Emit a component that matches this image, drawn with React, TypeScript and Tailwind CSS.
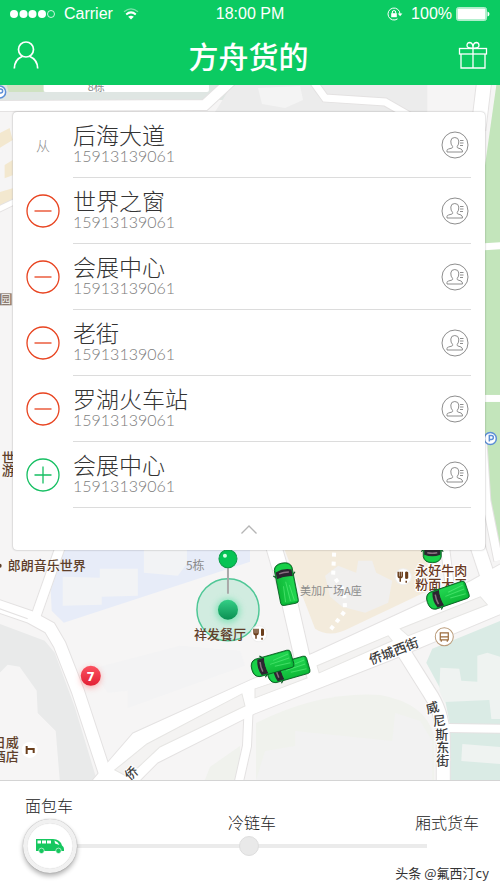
import React, { useState } from "react";

interface Stop {
  name: string;
  phone: string;
  kind: "from" | "remove" | "add";
}

const initialStops: Stop[] = [
  { name: "后海大道", phone: "15913139061", kind: "from" },
  { name: "世界之窗", phone: "15913139061", kind: "remove" },
  { name: "会展中心", phone: "15913139061", kind: "remove" },
  { name: "老街", phone: "15913139061", kind: "remove" },
  { name: "罗湖火车站", phone: "15913139061", kind: "remove" },
  { name: "会展中心", phone: "15913139061", kind: "add" },
];

const vehicles = ["面包车", "冷链车", "厢式货车"];

const roads = [
  { d: "M-5 604 L30 616 L50 627 L60 644 L78 690 L106 775", w: 12 },
  { d: "M36 616 L61 545", w: 9 },
  { d: "M272 540 L288 595 L304 665", w: 15 },
  { d: "M394 636 L428 690 Q442 710 443 735 L443 785", w: 13 },
  { d: "M249 700 L247 745 L238 785", w: 8 },
  { d: "M448 727 L505 728", w: 8 },
  { d: "M472 530 L492 590", w: 14 },
  { d: "M444 540 L450 590", w: 8 },
  { d: "M-5 106 L205 105 L232 80", w: 10 },
  { d: "M312 80 L325 98 L385 102 L420 122", w: 7 },
  { d: "M484 80 L478 130", w: 14 },
  { d: "M-5 211 L20 199", w: 5 },
  { d: "M482 440 L486 500 L498 560", w: 8 },
];

const medians = [
  "115,769 147,743 242,693 245,705 160,746 128,776",
  "255,688 305,671 307,677 255,697",
  "317,665 388,635 392,640 319,672",
  "400,628 480,596 487,604 408,635",
];

function Car({ x, y, angle }: { x: number; y: number; angle: number }) {
  return (
    <g transform={`translate(${x} ${y}) rotate(${angle})`}>
      <path d="M-10 -11 L-7 -8 M-10 11 L-7 8" stroke="#0a5a24" strokeWidth="1.2" />
      <path
        d="M-15 -9 H18 Q21 -9 21 -6 V6 Q21 9 18 9 H-15 Q-21 8 -21 0 Q-21 -8 -15 -9Z"
        fill="#07b437"
        stroke="#08581f"
        strokeWidth="0.8"
      />
      <path d="M-15 -8 Q-20 -7 -20 0 Q-20 7 -15 8 L-12 7 V-7Z" fill="#18d048" />
      <path d="M-13 -8 Q-16 0 -13 8 L-6 8 Q-8 0 -6 -8Z" fill="#2b2630" />
      <path d="M-11 -5 Q-12 0 -11 5" stroke="#8a6f80" strokeWidth="1.5" fill="none" />
      <path d="M-6 -8 H19 V8 H-6 Q-8 0 -6 -8Z" fill="url(#roof)" />
      <path d="M2 -3 L18 -5 M-2 0 L18 -1 M2 3 L18 4" stroke="#5ef07e" strokeWidth="1" opacity="0.6" />
    </g>
  );
}

function Restaurant({ x, y }: { x: number; y: number }) {
  return (
    <g transform={`translate(${x} ${y})`}>
      <circle r="8" fill="#fff" stroke="#eee" />
      <path
        d="M-5 -5 V-1 Q-5 1 -3 1 V5 M-3 -5 V1 M-1 -5 V-1 Q-1 1 -3 1 M3 -5 V2 M3 4 V6"
        stroke="#6b3f1c"
        strokeWidth="1.5"
        fill="none"
      />
      <rect x="2" y="-5" width="3" height="7" rx="1" fill="#6b3f1c" />
    </g>
  );
}

function CityMap() {
  return (
    <svg
      className="absolute inset-0 h-full w-full font-['Noto_Sans_CJK_SC',sans-serif]"
      viewBox="0 85 500 694"
      preserveAspectRatio="xMidYMin slice"
      aria-label="地图"
    >
      <defs>
        <linearGradient id="roof" x1="0" y1="0" x2="0" y2="1">
          <stop offset="0" stopColor="#22d651" />
          <stop offset="1" stopColor="#0fba38" />
        </linearGradient>
        <linearGradient id="dot" x1="0" y1="0" x2="0" y2="1">
          <stop offset="0" stopColor="#34cf86" />
          <stop offset="1" stopColor="#0b8f52" />
        </linearGradient>
        <linearGradient id="badge" x1="0" y1="0" x2="0" y2="1">
          <stop offset="0" stopColor="#fb5260" />
          <stop offset="1" stopColor="#e21f33" />
        </linearGradient>
        <filter id="glow" x="-50%" y="-50%" width="200%" height="200%">
          <feGaussianBlur stdDeviation="3" />
        </filter>
      </defs>
      <rect x="0" y="85" width="500" height="694" fill="#f6f5f5" />

      {/* Blocks, parks and buildings */}
      <rect x="0" y="85" width="230" height="15" fill="#dfe6e3" />
      <path d="M7 85 H44 V92 H9Z" fill="#cfe2c2" />
      <rect x="44" y="80" width="165" height="12" rx="2" fill="#fff" />
      <path d="M232 85 H427 V112 H215Z" fill="#ececec" />
      <path d="M258 88 L300 86 L303 100 L285 108 L262 104Z" fill="#f4f4f4" />
      <path d="M496 85 H500 V545 Q488 530 484 495 V170Z" fill="#c3e5bb" />
      <path d="M484 243 L500 242 V249 L484 250Z" fill="#fff" />
      <path d="M484 398 H500" stroke="#fff" strokeWidth="7" />
      <path d="M0 133 L10 128 L13 140 L0 148Z M5 165 L13 160 V175 L5 178Z M0 192 L13 188 V200 L0 206Z" fill="#f3e8cf" />
      <path d="M60 545 L250 545 V561 L64 622 L52 610 L51 590Z" fill="#e7ecf8" />
      <path d="M63 576 L100 577 V568 L138 568 V595 L102 596 V604 L63 605Z M144 545 H187 V563 L178 575 L144 572Z" fill="#f2f3f5" />
      <path d="M283 545 H424 L432 588 L350 627 Q330 638 315 628Z" fill="#f3ebdc" />
      <path d="M325 575 L338 565 L356 572 L358 560 L372 560 L376 572 L392 580 L388 602 L365 612 L342 606 L330 596Z" fill="#f0efee" />
      <path d="M334 552 L333 575 L344 590 L345 610 L328 632" stroke="#fff" strokeWidth="4" strokeDasharray="4 5" fill="none" />
      <path d="M0 623 L45 640 L55 652 L75 706 L97 779 H60 L56 730 L38 712 L37 690 L20 666 L8 664 L0 672Z" fill="#e9eaea" />
      <path d="M92 668 L180 645 L240 650 L245 665 L128 707 V690 L108 692Z" fill="#f3f3f4" />
      <path d="M256 722 Q320 690 380 694 Q425 702 434 735 V779 H256Z" fill="#f0f2ed" />
      <path d="M295 730 L392 740 L395 712 L420 720 L432 740 V779 H256 L265 750 L295 745Z" fill="#f2f2f2" />
      <path d="M210 766 L240 745 V779 H205Z" fill="#f0f2ed" />
      <path d="M432 648 L500 620 V779 H450 V725 L444 695 L426 662Z" fill="#daebe5" />
      <path d="M440 667 L459 668 L461 680 L477 681 V655 L487 652 L500 656 V718 H491 L489 699 L444 701 L439 690Z" fill="#eff3f1" />
      <path d="M462 743 L500 746 V763 L461 760Z" fill="#eff3f1" />

      {/* Roads: casing first, white surface on top */}
      {roads.map(({ d, w }) => (
        <path key={d} d={d} fill="none" stroke="#e4e2e2" strokeWidth={w + 2} />
      ))}
      <path
        d="M90 782 L107 762 L133 732 L250 679 L313 652 L430 598 L470 580 L502 562 V613 L390 660 L255 713 L158 762 L138 782Z"
        fill="#fff"
        stroke="#e4e2e2"
      />
      {roads.map(({ d, w }) => (
        <path key={d} d={d} fill="none" stroke="#fff" strokeWidth={w} />
      ))}
      {medians.map((points) => (
        <polygon key={points} points={points} fill="#f4f3f2" stroke="#e6e5e3" />
      ))}
      <path d="M0 608 L28 618" stroke="#e4e2e2" />

      {/* Place names */}
      <g fill="#8b8b8b" fontSize="12">
        <text x="88" y="91" fontSize="11">8栋</text>
        <text x="186" y="569">5栋</text>
        <text x="300" y="594" fontSize="11">美加广场A座</text>
      </g>
      <g fill="#5f3f2a" fontSize="13" fontWeight="500">
        <text x="8" y="569">郎朗音乐世界</text>
        <text x="2" y="461">世</text>
        <text x="2" y="474">游</text>
        <text x="-7" y="746">日威</text>
        <text x="-7" y="760">酒店</text>
      </g>
      <circle cx="0" cy="565" r="2" fill="#5f3f2a" />
      <rect x="0" y="293" width="12" height="12" fill="#8b7b70" />
      <text x="1" y="303" fontSize="10" fill="#fff">园</text>
      <g fill="#3c3c3c" fontSize="13" fontWeight="500" stroke="#fff" strokeWidth="2" paintOrder="stroke">
        <text transform="translate(371 664) rotate(-21)">侨城西街</text>
        <text transform="translate(130 780) rotate(-42)">侨</text>
        <text transform="translate(427 713) rotate(-15)">威</text>
        <text transform="translate(433 725) rotate(-5)">尼</text>
        <text x="435" y="738">斯</text>
        <text x="436" y="751">东</text>
        <text x="436" y="764">街</text>
      </g>
      {[
        [0, 92],
        [490, 438],
      ].map(([x, y]) => (
        <g key={x} transform={`translate(${x} ${y})`}>
          <circle r="6" fill="#fff" stroke="#5c8fd6" strokeWidth="1.5" />
          <path d="M-1 3 V-3 H1 Q3 -3 3 -1 Q3 1 1 1 H-1" stroke="#5c8fd6" strokeWidth="1.5" fill="none" />
        </g>
      ))}
      <circle cx="30" cy="749" r="8" fill="#fff" />
      <path d="M27 745 V753 M27 748 H35 M34 748 V752" stroke="#6b3f1c" strokeWidth="2" />
      <Restaurant x={403} y={576} />
      <circle cx="444" cy="636" r="9" fill="#fff" stroke="#b99a78" />
      <path d="M440 632 H448 V639 H440Z M440 636 H448 M441 639 V641 M447 639 V641" stroke="#9a6b3c" strokeWidth="1.2" fill="none" />

      {/* Pick-up pin */}
      <circle cx="228" cy="609" r="31" fill="#3fc98a" fillOpacity="0.2" stroke="#4fc796" strokeWidth="1.5" />
      <circle cx="228" cy="610" r="12" fill="#58dba0" opacity="0.6" filter="url(#glow)" />
      <circle cx="228" cy="609" r="10" fill="url(#dot)" />
      <path d="M228 565 V593" stroke="#a9a9a9" strokeWidth="2" />
      <circle cx="228" cy="558" r="9" fill="#05c455" stroke="#0a9c47" />
      <circle cx="225" cy="555" r="2" fill="#d5ffe4" />
      <Restaurant x={259} y={633} />
      <text x="194" y="638" fontSize="13" fontWeight="500" fill="#5f3f2a">祥发餐厅</text>

      <circle cx="91" cy="677" r="10" fill="#f66" opacity="0.5" filter="url(#glow)" />
      <circle cx="91" cy="675" r="10" fill="url(#badge)" />
      <text x="91" y="680" textAnchor="middle" className="font-['DejaVu_Sans',sans-serif]" fontSize="12" fontWeight="700" fill="#fff">
        7
      </text>

      <g fill="#6b3a24" fontSize="13" fontWeight="500" stroke="#fff" strokeWidth="2" paintOrder="stroke">
        <text x="415" y="574">永好牛肉</text>
        <text x="415" y="588">粉面大王</text>
      </g>
      <Car x={286} y={583} angle={79} />
      <Car x={288} y={669} angle={-16} />
      <Car x={272} y={663} angle={-16} />
      <Car x={447} y={595} angle={-19} />
      <Car x={432} y={541} angle={-90} />
    </svg>
  );
}

function ContactIcon() {
  return (
    <svg viewBox="0 0 28 28" className="h-7 w-7" fill="none" stroke="#8e8e8e" strokeWidth="1">
      <circle cx="14" cy="14" r="13" />
      <path d="M6 21 V19.5 Q6 18.3 7.5 18 L11 17 Q12 16.7 11.6 15.5 Q9.6 13.5 9.8 10 Q10 6.5 13.8 6.5 Q17.5 6.5 17.8 10 Q18 13.5 16.2 15.5 Q15.8 16.7 17 17 L20 18 Q21.5 18.5 21.5 21 Z" />
      <path d="M19 9.5 H22.5 M19 12 H22.5 M19 14.5 H22" />
    </svg>
  );
}

function StopButton({ kind, onClick }: { kind: "remove" | "add"; onClick: () => void }) {
  const isAdd = kind === "add";
  return (
    <button onClick={onClick} aria-label={isAdd ? "添加" : "删除"}>
      <svg viewBox="0 0 34 34" className="h-[34px] w-[34px]" fill="none" stroke={isAdd ? "#15bf62" : "#e8431f"}>
        <circle cx="17" cy="17" r="16" strokeWidth="1.3" />
        <path d={isAdd ? "M8.5 17 H25.5 M17 8.5 V25.5" : "M8.5 17 H25.5"} strokeWidth="1.3" />
      </svg>
    </button>
  );
}

function Header() {
  return (
    <header className="bg-[#0bcb62] text-white">
      <div className="grid h-7 grid-cols-3 items-center pl-[10px] pr-[10px] font-['Liberation_Sans',Arial,sans-serif] text-base">
        <div className="flex items-center gap-2">
          <svg viewBox="0 0 46 10" className="h-[10px] w-[46px]" fill="#fff">
            <circle cx="4" cy="5" r="4" />
            <circle cx="13.5" cy="5" r="4" />
            <circle cx="22.5" cy="5" r="4" />
            <circle cx="32" cy="5" r="4" />
            <circle cx="41" cy="5" r="3.5" fill="none" stroke="#fff" strokeWidth="0.8" />
          </svg>
          <span>Carrier</span>
          <svg viewBox="0 0 16 12" className="ml-[2px] h-3 w-4" fill="none" stroke="#fff">
            <path d="M1 3.8 Q8 -2 15 3.8" strokeWidth="1.2" opacity="0.45" />
            <path d="M3.2 6.4 Q8 2.4 12.8 6.4" strokeWidth="2" />
            <path d="M8 11.5 L5.2 8.8 Q8 6.6 10.8 8.8Z" fill="#fff" stroke="none" />
          </svg>
        </div>
        <div className="text-center">18:00 PM</div>
        <div className="flex items-center justify-end gap-1">
          <svg viewBox="0 0 16 14" className="mr-1 h-[14px] w-4" fill="none" stroke="#fff">
            <path d="M13 7 A6 6 0 1 0 10.5 11.9" strokeWidth="1" />
            <path d="M10.8 6.5 H15.4 L13.1 9.3Z" fill="#fff" stroke="none" />
            <rect x="4.2" y="6.2" width="5.6" height="4" fill="#fff" stroke="none" />
            <path d="M5.3 6.5 V5 Q5.3 3.6 7 3.6 Q8.7 3.6 8.7 5 V6.5" strokeWidth="1" />
          </svg>
          <span>100%</span>
          <svg viewBox="0 0 34 14" className="h-[14px] w-[34px]">
            <rect x="0.5" y="0.5" width="30" height="13" rx="2" fill="#fff" fillOpacity="0.5" stroke="#fff" strokeWidth="0.8" opacity="0.8" />
            <rect x="1.5" y="1.5" width="28" height="11" rx="1" fill="#fff" />
            <path d="M31.5 4.5 Q33.5 5 33.5 7 Q33.5 9 31.5 9.5Z" fill="#fff" />
          </svg>
        </div>
      </div>
      <div className="flex h-[57px] items-center justify-between pb-1 pl-[13px] pr-3">
        <button aria-label="我的">
          <svg viewBox="0 0 26 28" className="h-7 w-[26px]" fill="none" stroke="#fff" strokeWidth="1.7">
            <circle cx="13" cy="8.5" r="7.5" />
            <path d="M1.3 27.5 Q1.5 18.5 9.5 15.2 M24.7 27.5 Q24.5 18.5 16.5 15.2" />
          </svg>
        </button>
        <h1 className="font-['Noto_Sans_CJK_SC',sans-serif] text-[30px] font-medium leading-none">方舟货的</h1>
        <button aria-label="礼物">
          <svg viewBox="0 0 30 28" className="h-7 w-[30px]" fill="none" stroke="#fff" strokeWidth="1.3">
            <rect x="1.5" y="7.5" width="27" height="5.5" />
            <path d="M3 13 V27 H27 V13 M15 7.5 V27" />
            <path d="M15 7 Q9 7.5 9 4.5 Q9 1.5 11.8 1.5 Q15 1.8 15 7 Q15 1.8 18.2 1.5 Q21 1.5 21 4.5 Q21 7.5 15 7" />
          </svg>
        </button>
      </div>
    </header>
  );
}

export default function App() {
  const [stops, setStops] = useState(initialStops);
  const [isOpen, setIsOpen] = useState(true);
  const [vehicle, setVehicle] = useState(0);

  const handleStop = (index: number) => {
    if (stops[index].kind === "remove") {
      setStops(stops.filter((_, i) => i !== index));
    }
  };

  const visibleStops = isOpen ? stops : stops.slice(0, 1);

  return (
    <div className="flex min-h-screen flex-col bg-white font-['Noto_Sans_CJK_SC',sans-serif]">
      <Header />

      {/* Map with the stop list on top */}
      <main className="relative flex-1 overflow-hidden pt-[27px]">
        <CityMap />
        <section className="relative ml-[13px] mr-[15px] rounded-sm bg-white shadow-[0_0_2px_rgba(0,0,0,0.35)]">
          <ul>
            {visibleStops.map((stop, index) => (
              <li key={index} className="flex h-[66px]">
                <div className="flex w-[60px] items-center justify-center">
                  {stop.kind === "from" ? (
                    <span className="text-sm font-light text-[#8e8e8e]">从</span>
                  ) : (
                    <StopButton kind={stop.kind} onClick={() => handleStop(index)} />
                  )}
                </div>
                <div className="mr-[14px] flex flex-1 items-center justify-between border-b border-[#dcdcdc]">
                  <div>
                    <div className="text-[23px] font-light leading-[22px] text-[#333]">{stop.name}</div>
                    <div className="font-['Lato',sans-serif] text-base font-light leading-[22px] text-[#7c7c7c]">
                      {stop.phone}
                    </div>
                  </div>
                  <button className="mr-[2px]" aria-label="联系人">
                    <ContactIcon />
                  </button>
                </div>
              </li>
            ))}
          </ul>
          <button
            className="flex h-[42px] w-full items-center justify-center"
            aria-label={isOpen ? "收起" : "展开"}
            onClick={() => setIsOpen(!isOpen)}
          >
            <svg viewBox="0 0 16 9" className="h-[9px] w-4" fill="none" stroke="#b5b5b5" strokeWidth="1.3">
              <path d={isOpen ? "M0.5 8.5 L8 1 L15.5 8.5" : "M0.5 1 L8 8.5 L15.5 1"} />
            </svg>
          </button>
        </section>
      </main>

      {/* Vehicle picker */}
      <footer className="border-t border-[#d4d4d4] bg-white pt-[14px]">
        <div className="flex h-6 items-start pl-[25px] pr-[21px] text-base font-light leading-5 text-[#222]">
          {vehicles.map((name, i) => (
            <label
              key={name}
              htmlFor="vehicle"
              className={`flex-1 ${i === vehicle ? "" : "pt-[17px]"} ${
                i === 1 ? "text-center" : i === 2 ? "text-right" : ""
              }`}
            >
              {name}
            </label>
          ))}
        </div>
        <div className="relative ml-[23px] mr-[46px] flex h-[54px] items-center">
          <div className="absolute inset-x-[27px] h-1 bg-[#ebebeb]" />
          <div className="absolute left-1/2 h-5 w-5 rounded-full border border-[#dedede] bg-[#e9e9e9]" />
          <input
            id="vehicle"
            type="range"
            min={0}
            max={2}
            value={vehicle}
            onChange={(e) => setVehicle(Number(e.target.value))}
            className="relative h-[54px] w-full appearance-none bg-transparent [&::-webkit-slider-thumb]:h-[54px] [&::-webkit-slider-thumb]:w-[54px] [&::-webkit-slider-thumb]:appearance-none [&::-webkit-slider-thumb]:rounded-full [&::-webkit-slider-thumb]:border-4 [&::-webkit-slider-thumb]:border-[#f1f1f1] [&::-webkit-slider-thumb]:bg-white [&::-webkit-slider-thumb]:shadow-[0_3px_5px_rgba(0,0,0,0.3),0_0_1px_rgba(0,0,0,0.4),inset_0_0_1px_rgba(0,0,0,0.4)]"
          />
          <div
            className="pointer-events-none absolute flex w-[54px] justify-center"
            style={{ left: `calc((100% - 54px) * ${vehicle / 2})` }}
          >
            <svg viewBox="0 0 28 16" className="h-4 w-7">
              <path d="M0 1 H17 Q24 1 26 7.5 Q28 8.5 28 11 V13 H0Z" fill="#16c75f" />
              <path d="M1.5 2.5 H5 V5.5 H1.5Z M6 2.5 H10 V5.5 H6Z M11 2.5 H15 V5.5 H11Z M18.5 2.5 Q22 3.5 23.5 7 L19 5.5Z" fill="#fff" />
              <circle cx="5.5" cy="12.8" r="2.7" fill="#16c75f" stroke="#fff" strokeWidth="0.6" />
              <circle cx="22.5" cy="12.8" r="2.7" fill="#16c75f" stroke="#fff" strokeWidth="0.6" />
            </svg>
          </div>
        </div>
        <p className="-mt-[10px] pb-[6px] pr-[11px] text-right text-[13px] leading-5 text-[#333]">头条 @氟西汀cy</p>
      </footer>
    </div>
  );
}
